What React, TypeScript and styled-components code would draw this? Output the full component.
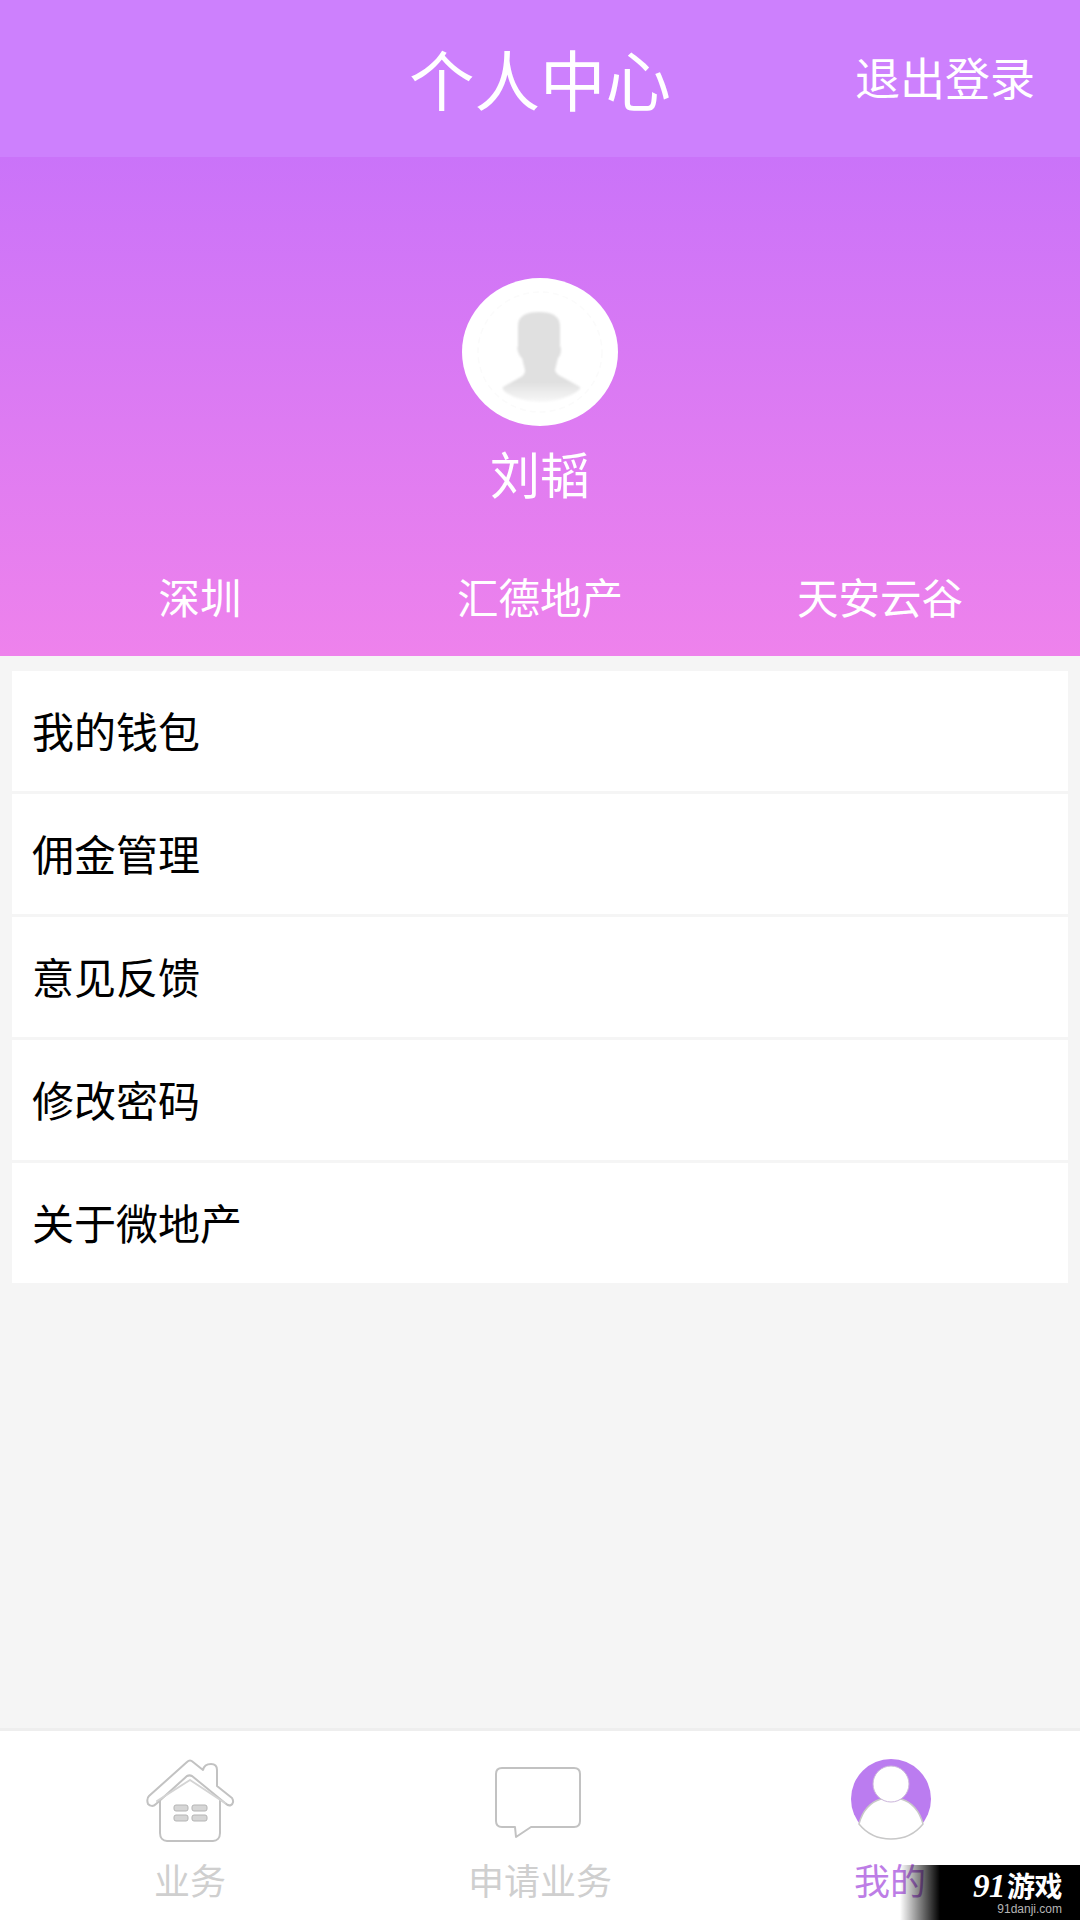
import React from "react";
import styled, { createGlobalStyle } from "styled-components";

const Global = createGlobalStyle`
  html, body { margin: 0; padding: 0; background: #f4f4f4; }
  body { font-family: "Noto Sans CJK SC", "Liberation Sans", sans-serif; }
  * { box-sizing: border-box; }
`;

const Page = styled.div`
  position: relative;
  width: 1080px;
  height: 1920px;
  display: flex;
  flex-direction: column;
  background: #f5f5f5;
  overflow: hidden;
`;

const Header = styled.header`
  height: 157px;
  flex: none;
  display: grid;
  grid-template-columns: 1fr auto 1fr;
  align-items: center;
  background: #cd80fd;
  color: #fff;
`;

const Title = styled.h1`
  margin: 0;
  font-size: 65.5px;
  font-weight: 400;
  line-height: 1;
  padding-bottom: 2px;
`;

const Logout = styled.div`
  justify-self: end;
  padding: 0 45px 4px 0;
  font-size: 45px;
  line-height: 1;
`;

const Hero = styled.section`
  height: 499px;
  flex: none;
  display: flex;
  flex-direction: column;
  align-items: center;
  padding-top: 121px;
  background: linear-gradient(180deg, #ca73f9 0%, #ee82ec 100%);
  color: #fff;
`;

const Avatar = styled.div`
  width: 156px;
  height: 148px;
  border-radius: 50%;
  background: #fff;
  display: flex;
  align-items: center;
  justify-content: center;
`;

const Name = styled.div`
  margin-top: 17px;
  font-size: 50px;
  line-height: 58px;
`;

const Facts = styled.div`
  margin-top: 70px;
  align-self: stretch;
  display: grid;
  grid-template-columns: repeat(3, 340px);
  padding: 0 30px;
  text-align: center;
  font-size: 41.5px;
  line-height: 50px;
`;

const Menu = styled.ul`
  list-style: none;
  margin: 15px 12px 0;
  padding: 0;
  display: flex;
  flex-direction: column;
  gap: 3px;
`;

const MenuRow = styled.li`
  height: 120px;
  display: flex;
  align-items: center;
  padding: 0 0 3px 20px;
  background: #fff;
  color: #000;
  font-size: 42px;
`;

const TabBar = styled.nav`
  margin-top: auto;
  height: 192px;
  flex: none;
  display: grid;
  grid-template-columns: repeat(3, 350px);
  padding: 26px 15px 0;
  background: #fff;
  border-top: 3px solid #eeeeee;
`;

const Tab = styled.div<{ $active?: boolean }>`
  display: flex;
  flex-direction: column;
  align-items: center;
  color: ${(p) => (p.$active ? "#bd7de6" : "#cfcfcf")};
  font-size: 36px;
  line-height: 44px;
`;

const TabIcon = styled.svg`
  width: 90px;
  height: 86px;
  flex: none;
  margin-bottom: 14px;
`;

const Watermark = styled.div`
  position: absolute;
  right: 0;
  bottom: 0;
  width: 180px;
  height: 55px;
  padding: 7px 18px 0 0;
  display: flex;
  flex-direction: column;
  align-items: flex-end;
  background: linear-gradient(90deg, rgba(0, 0, 0, 0) 0, #000 40px);
  color: #fff;
`;

const MarkBrand = styled.div`
  font-family: "Liberation Serif", "Noto Sans CJK SC", serif;
  font-size: 28px;
  font-weight: 700;
  line-height: 29px;
  letter-spacing: -0.5px;
`;

const MarkLogo = styled.span`
  font-style: italic;
  font-size: 33px;
  margin-right: 2px;
`;

const MarkSite = styled.div`
  font-family: "Liberation Sans", sans-serif;
  font-size: 12px;
  line-height: 14px;
  color: #b5b5b5;
`;

const menu = ["我的钱包", "佣金管理", "意见反馈", "修改密码", "关于微地产"];

export default function App() {
  return (
    <Page>
      <Global />
      <Header>
        <span />
        <Title>个人中心</Title>
        <Logout>退出登录</Logout>
      </Header>
      <Hero>
        <Avatar>
          <svg width="156" height="148" viewBox="0 0 156 148">
            <defs>
              <filter id="soft"><feGaussianBlur stdDeviation="1.2" /></filter>
              <filter id="tiny"><feGaussianBlur stdDeviation="0.5" /></filter>
              <linearGradient id="fade" x1="0" y1="0" x2="0" y2="1">
                <stop offset="0.78" stopColor="#e0e0e0" />
                <stop offset="1" stopColor="#f8f8f8" />
              </linearGradient>
            </defs>
            <ellipse cx="78" cy="74" rx="62" ry="60" fill="none" stroke="#fbfbfb" strokeWidth="1.5" strokeDasharray="6 4" />
            <path
              filter="url(#soft)"
              fill="url(#fade)"
              d="M56 48C56 38 64 34 77 34S98 38 98 48V68C100 70 99 78 96 80L93 92C94 96 98 98 102 100L118 109C120 113 100 124 78 124C56 124 38 113 41 109L57 100C61 98 63 96 63 92L60 80C57 78 54 70 56 68Z"
            />
          </svg>
        </Avatar>
        <Name>刘韬</Name>
        <Facts>
          <span>深圳</span>
          <span>汇德地产</span>
          <span>天安云谷</span>
        </Facts>
      </Hero>
      <Menu>
        {menu.map((m) => (
          <MenuRow key={m}>{m}</MenuRow>
        ))}
      </Menu>
      <TabBar>
        <Tab>
          <TabIcon viewBox="0 0 90 86">
            <g filter="url(#tiny)">
              <g fill="none" stroke="#c2c2c2" strokeWidth="2" strokeLinejoin="round" strokeLinecap="round">
                <path fill="#fff" d="M15 38V76C15 81 18 84 22 84H68C72 84 75 81 75 76V38" />
                <path
                  fill="#fff"
                  d="M4 39L42 5C44 3 46 3 48 5L58 13C59 8 62 7 66 7C70 7 72 9 72 13V29L87 41C89 44 88 47 86 48C84 49 82 48 80 46L47 19C45 18 44 18 42 19L11 47C8 50 5 49 3 47C2 44 2 41 4 39Z"
                />
                <path d="M12 44L45 23L80 46" stroke="#d4d4d4" />
              </g>
              <g fill="#d6d6d6" stroke="#b5b5b5" strokeWidth="1">
                <rect x="29" y="48" width="14" height="6" rx="2" />
                <rect x="47" y="48" width="15" height="6" rx="2" />
                <rect x="29" y="58" width="14" height="6" rx="2" />
                <rect x="47" y="58" width="15" height="6" rx="2" />
              </g>
            </g>
          </TabIcon>
          业务
        </Tab>
        <Tab>
          <TabIcon viewBox="0 0 90 86">
            <path
              filter="url(#tiny)"
              fill="#fff"
              stroke="#c2c2c2"
              strokeWidth="2"
              strokeLinejoin="round"
              d="M7 11H79C83 11 85 13 85 17V64C85 68 83 70 79 70H36L21 80L20 70H7C3 70 1 68 1 64V17C1 13 3 11 7 11Z"
            />
          </TabIcon>
          申请业务
        </Tab>
        <Tab $active>
          <TabIcon viewBox="0 0 90 86">
            <circle cx="46" cy="42" r="40" fill="#bb7cf0" />
            <path
              fill="#fff"
              stroke="#c8c8c8"
              strokeWidth="1.5"
              d="M14 67C18 52 26 45 36 42H56C66 45 74 52 78 67C70 77 58 82 46 82C34 82 22 77 14 67Z"
            />
            <circle cx="46" cy="27" r="18" fill="#fff" stroke="#cbb5da" strokeWidth="1" />
          </TabIcon>
          我的
        </Tab>
      </TabBar>
      <Watermark>
        <MarkBrand>
          <MarkLogo>91</MarkLogo>游戏
        </MarkBrand>
        <MarkSite>91danji.com</MarkSite>
      </Watermark>
    </Page>
  );
}
